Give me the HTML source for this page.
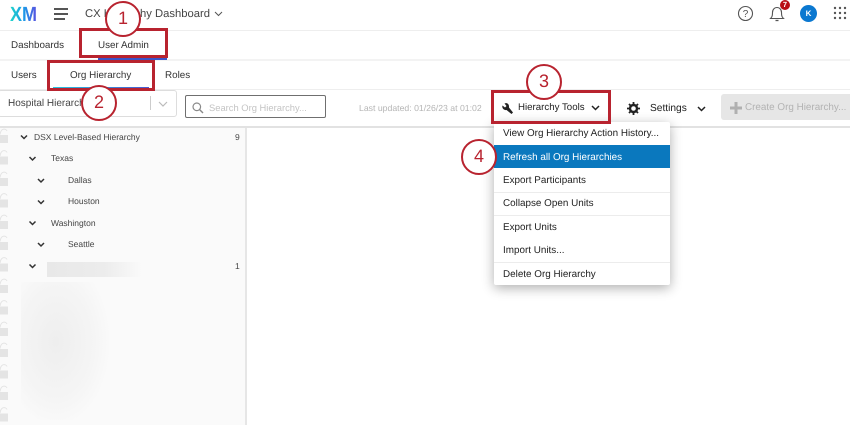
<!DOCTYPE html>
<html><head><meta charset="utf-8">
<style>
html,body{margin:0;padding:0;background:#fff}
#p{position:relative;width:850px;height:425px;overflow:hidden;background:#fff;font-family:"Liberation Sans",sans-serif;color:#333;text-rendering:geometricPrecision}
.t{position:absolute;white-space:nowrap;font-size:9.85px;line-height:14px}
.s{font-size:8.5px;color:#444}
.b{position:absolute;box-sizing:border-box}
.m{position:absolute;left:503px;font-size:9.9px;line-height:14px;color:#222;white-space:nowrap}
.red{position:absolute;box-sizing:border-box;border:3px solid #b8232f}
.c{position:absolute;box-sizing:border-box;width:36px;height:36px;border:2.6px solid #b8232f;border-radius:50%;background:#fff;color:#b8232f;font-size:18px;line-height:31px;text-align:center}
svg{position:absolute;overflow:visible}
</style></head><body><div id="p">

<!-- rules -->
<div class="b" style="left:0;top:30px;width:850px;height:1px;background:#eee"></div>
<div class="b" style="left:0;top:59px;width:850px;height:2px;background:#f3f3f3"></div>
<div class="b" style="left:0;top:89px;width:850px;height:1px;background:#eee"></div>
<div class="b" style="left:0;top:126px;width:850px;height:2px;background:#e2e2e2"></div>

<!-- logo -->
<svg style="left:0;top:0" width="60" height="30"><defs><linearGradient id="g" gradientUnits="userSpaceOnUse" x1="10" x2="37" y1="0" y2="0"><stop offset="0" stop-color="#1fd6c8"/><stop offset=".5" stop-color="#1b9be8"/><stop offset="1" stop-color="#5a4fe0"/></linearGradient></defs>
<text x="10" y="21" font-family="Liberation Sans" font-weight="bold" font-size="20.5" textLength="27" lengthAdjust="spacingAndGlyphs" fill="url(#g)">XM</text></svg>
<div class="b" style="left:54px;top:8px;width:14px;height:1.5px;background:#555"></div>
<div class="b" style="left:54px;top:13px;width:14px;height:1.5px;background:#555"></div>
<div class="b" style="left:54px;top:18px;width:11px;height:1.5px;background:#555"></div>

<div class="t" style="left:85px;top:7px;font-size:11.25px;color:#444">CX Hierarchy Dashboard</div>
<svg style="left:214px;top:11px" width="10" height="6"><path d="M1 1l3.500 3.500L8 1" fill="none" stroke="#555" stroke-width="1"/></svg>

<!-- top right -->
<svg style="left:738px;top:6px" width="16" height="16"><circle cx="7.500" cy="7.500" r="7" fill="none" stroke="#555" stroke-width="1.100"/><text x="7.500" y="11" text-anchor="middle" font-family="Liberation Sans" font-size="10" fill="#555">?</text></svg>
<svg style="left:769px;top:5px" width="16" height="17"><path d="M1.500 13.500c1.500-1.500 2-2.500 2-6 0-3 2-5 4.500-5s4.500 2 4.500 5c0 3.500.5 4.500 2 6z" fill="none" stroke="#555" stroke-width="1.100"/><path d="M6.500 15.500h3" stroke="#555" stroke-width="1.300"/></svg>
<div class="b" style="left:780px;top:0;width:10px;height:10px;border-radius:50%;background:#b80d14;color:#fff;font-size:7.500px;line-height:10px;text-align:center;font-weight:bold">7</div>
<div class="b" style="left:800px;top:5px;width:17px;height:17px;border-radius:50%;background:#0b78d0;color:#fff;font-size:8px;line-height:17px;text-align:center;font-weight:bold">K</div>
<svg style="left:833px;top:6px" width="14" height="14" fill="#555"><circle cx="2" cy="2" r="1.200"/><circle cx="7" cy="2" r="1.200"/><circle cx="12" cy="2" r="1.200"/><circle cx="2" cy="7" r="1.200"/><circle cx="7" cy="7" r="1.200"/><circle cx="12" cy="7" r="1.200"/><circle cx="2" cy="12" r="1.200"/><circle cx="7" cy="12" r="1.200"/><circle cx="12" cy="12" r="1.200"/></svg>

<!-- nav -->
<div class="t" style="left:11px;top:39px">Dashboards</div>
<div class="t" style="left:98px;top:39px">User Admin</div>
<div class="b" style="left:98px;top:58px;width:69px;height:2px;background:#3a55c8"></div>
<div class="t" style="left:11px;top:69px">Users</div>
<div class="t" style="left:70px;top:69px">Org Hierarchy</div>
<div class="t" style="left:165px;top:69px">Roles</div>
<div class="b" style="left:53px;top:87px;width:96px;height:2px;background:linear-gradient(90deg,#25c4e0,#4a5ad0)"></div>

<!-- toolbar -->
<div class="b" style="left:-2px;top:90px;width:179px;height:27px;border:1px solid #ddd;border-radius:3px;background:#fff"></div>
<div class="t" style="left:8px;top:97px;color:#444;font-size:10px">Hospital Hierarchy</div>
<div class="b" style="left:150px;top:96px;width:1px;height:14px;background:#ccc"></div>
<svg style="left:158px;top:101px" width="10" height="6"><path d="M1 1l4 4 4-4" fill="none" stroke="#bbb" stroke-width="1.200"/></svg>
<div class="b" style="left:185px;top:95px;width:141px;height:23px;border:1.500px solid #6f6f6f;border-radius:2px;background:#fff"></div>
<svg style="left:192px;top:102px" width="12" height="12"><circle cx="4.800" cy="4.800" r="3.800" fill="none" stroke="#888" stroke-width="1.200"/><path d="M7.500 7.500l3.500 3.500" stroke="#888" stroke-width="1.400"/></svg>
<div class="t" style="left:209px;top:101px;font-size:9.400px;color:#c4c4c4">Search Org Hierarchy...</div>
<div class="t" style="left:359px;top:101px;font-size:8.700px;color:#b5b5b5">Last updated: 01/26/23 at 01:02</div>

<svg style="left:501px;top:102px" width="13" height="13"><path d="M1.500 3.500L4 5.500 5.500 4 3.500 1.500C5.500.5 8 1.500 8 4.500L8 5.500 12 10.500 10.500 12 5.500 8C3 8.500.5 6 1.500 3.500z" fill="#222"/></svg>
<div class="t" style="left:518px;top:101px;color:#222;font-size:9.700px">Hierarchy Tools</div>
<svg style="left:591px;top:105px" width="9" height="6"><path d="M1 1l3.500 3.500L8 1" fill="none" stroke="#222" stroke-width="1.500"/></svg>
<svg style="left:627px;top:102px" width="13" height="13"><circle cx="6.500" cy="6.500" r="3.500" fill="none" stroke="#222" stroke-width="2.400"/><path d="M6.500 0v3M6.500 10v3M0 6.500h3M10 6.500h3M2 2l2 2M9 9l2 2M11 2L9 4M4 9l-2 2" stroke="#222" stroke-width="1.800"/></svg>
<div class="t" style="left:650px;top:102px;color:#222;font-size:10.200px">Settings</div>
<svg style="left:697px;top:106px" width="9" height="6"><path d="M1 1l3.500 3.500L8 1" fill="none" stroke="#222" stroke-width="1.500"/></svg>
<div class="b" style="left:721px;top:94px;width:135px;height:26px;border-radius:3px;background:#e6e6e6"></div>
<svg style="left:730px;top:102px" width="12" height="12"><path d="M6 0v12M0 6h12" stroke="#b0b0b0" stroke-width="3"/></svg>
<div class="t" style="left:745px;top:101px;color:#b3b3b3;font-size:9.900px">Create Org Hierarchy...</div>

<!-- sidebar -->
<div class="b" style="left:0;top:128px;width:245px;height:297px;background:#fafafa"></div>
<div class="b" style="left:245px;top:128px;width:2px;height:297px;background:#e6e6e6"></div>
<div class="b" style="left:47px;top:262px;width:95px;height:15px;background:linear-gradient(90deg,#e8e8e8,#ececec 60%,#fafafa)"></div>
<div class="b" style="left:21px;top:282px;width:90px;height:138px;background:radial-gradient(ellipse 55px 85px at 35px 60px,#eeeeee,#f5f5f5 70%,#fafafa)"></div>

<svg style="left:0;top:128px" width="9" height="297" fill="#e4e4e4">
<g id="l"><path d="M0 7h8v8H0z"/><path d="M0 6.500C1-.5 6 .5 7 3" fill="none" stroke="#e4e4e4" stroke-width="1"/></g>
<use href="#l" y="21.500"/><use href="#l" y="43"/><use href="#l" y="64.500"/><use href="#l" y="86"/><use href="#l" y="107"/><use href="#l" y="128.500"/><use href="#l" y="150"/><use href="#l" y="171.500"/><use href="#l" y="193"/><use href="#l" y="214"/><use href="#l" y="235.500"/><use href="#l" y="257"/><use href="#l" y="278.500"/>
</svg>

<svg style="left:0;top:0" width="60" height="280" fill="none" stroke="#333" stroke-width="1.500">
<path d="M21 135.500l3 3 3-3M29.500 157l3 3 3-3M38 179l3 3 3-3M38 200.500l3 3 3-3M29.500 221.500l3 3 3-3M38 243l3 3 3-3M29.500 264.500l3 3 3-3"/>
</svg>
<div class="t s" style="left:34px;top:130px">DSX Level-Based Hierarchy</div>
<div class="t s" style="left:51px;top:151px">Texas</div>
<div class="t s" style="left:68px;top:173px">Dallas</div>
<div class="t s" style="left:68px;top:194px">Houston</div>
<div class="t s" style="left:51px;top:216px">Washington</div>
<div class="t s" style="left:68px;top:237px">Seattle</div>
<div class="t s" style="left:235px;top:130px">9</div>
<div class="t s" style="left:235px;top:259px">1</div>

<!-- menu -->
<div class="b" style="left:494px;top:122px;width:176px;height:163px;background:#fff;border-radius:2px;box-shadow:0 3px 12px rgba(0,0,0,.32)"></div>
<div class="b" style="left:494px;top:145px;width:176px;height:23px;background:#0a78be"></div>
<div class="b" style="left:494px;top:192px;width:176px;height:1px;background:#ececec"></div>
<div class="b" style="left:494px;top:215px;width:176px;height:1px;background:#ececec"></div>
<div class="b" style="left:494px;top:262px;width:176px;height:1px;background:#ececec"></div>
<div class="m" style="top:127px">View Org Hierarchy Action History...</div>
<div class="m" style="top:151px;color:#fff">Refresh all Org Hierarchies</div>
<div class="m" style="top:174px">Export Participants</div>
<div class="m" style="top:197px">Collapse Open Units</div>
<div class="m" style="top:221px">Export Units</div>
<div class="m" style="top:244px">Import Units...</div>
<div class="m" style="top:268px">Delete Org Hierarchy</div>

<!-- annotations -->
<div class="red" style="left:79px;top:28px;width:89px;height:30px"></div>
<div class="red" style="left:47px;top:60px;width:108px;height:31px"></div>
<div class="red" style="left:491px;top:90px;width:120px;height:34px"></div>
<div class="c" style="left:105px;top:1px">1</div>
<div class="c" style="left:81px;top:85px">2</div>
<div class="c" style="left:526px;top:64px">3</div>
<div class="c" style="left:461px;top:139px">4</div>
</div></body></html>
